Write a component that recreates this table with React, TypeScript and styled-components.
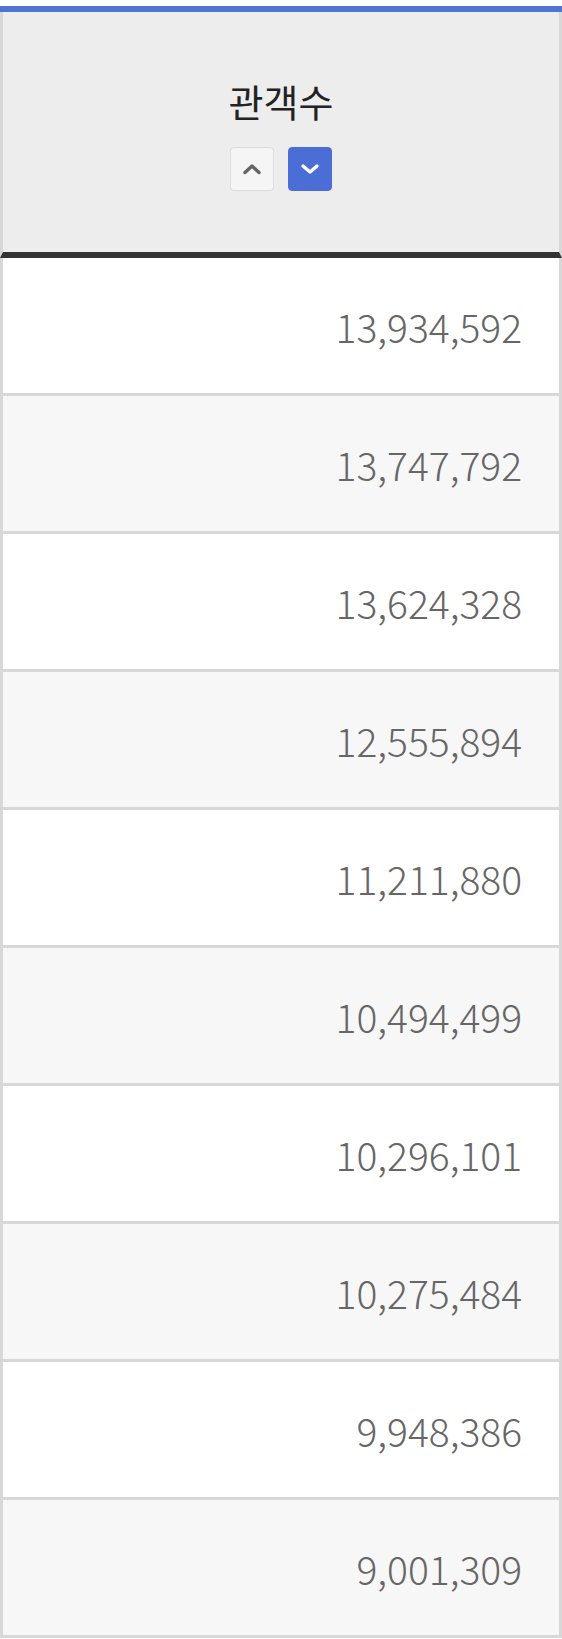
import React from "react";
import styled, { createGlobalStyle } from "styled-components";

const GlobalStyle = createGlobalStyle`
  html, body {
    margin: 0;
    padding: 0;
    background: #ffffff;
  }
  body {
    font-family: "Noto Sans CJK KR", "Noto Sans", sans-serif;
  }
`;

const Page = styled.div`
  padding-top: 6px;
  width: 562px;
`;

const Table = styled.div`
  display: flex;
  flex-direction: column;
  border-top: 6px solid #4f74d4;
`;

const HeaderCell = styled.div`
  display: flex;
  flex-direction: column;
  align-items: center;
  height: 246px;
  box-sizing: border-box;
  padding-top: 64px;
  background: #ededed;
  border-left: 3px solid #d8d8d8;
  border-right: 3px solid #d8d8d8;
  border-bottom: 6px solid #333333;
`;

const HeaderTitle = styled.div`
  font-size: 38px;
  line-height: 50px;
  color: #222222;
  font-weight: 400;
`;

const SortGroup = styled.div`
  display: flex;
  gap: 14px;
  margin-top: 21px;
`;

const SortButton = styled.button<{ $active?: boolean }>`
  width: 44px;
  height: 44px;
  padding: 0;
  display: flex;
  align-items: center;
  justify-content: center;
  border-radius: 4px;
  border: 1px solid ${(p) => (p.$active ? "#4a6dd6" : "#dcdcdc")};
  background: ${(p) => (p.$active ? "#4a6dd6" : "#f5f5f5")};
  color: ${(p) => (p.$active ? "#ffffff" : "#666666")};
  cursor: pointer;
`;

const Row = styled.div<{ $alt: boolean }>`
  display: flex;
  align-items: center;
  justify-content: flex-end;
  height: 138px;
  box-sizing: border-box;
  padding-right: 37px;
  background: ${(p) => (p.$alt ? "#f7f7f7" : "#ffffff")};
  border-left: 3px solid #d8d8d8;
  border-right: 3px solid #d8d8d8;
  border-bottom: 3px solid #d8d8d8;
`;

const Value = styled.span`
  font-family: "Noto Sans CJK KR Light", "Noto Sans CJK KR", "Noto Sans", sans-serif;
  font-size: 39px;
  font-weight: 300;
  color: #666666;
`;

const Chevron = ({ dir }: { dir: "up" | "down" }) => (
  <svg width="24" height="14" viewBox="0 0 24 14" fill="none">
    <path
      d={dir === "up" ? "M5 10.5 L12 4 L19 10.5" : "M5 4 L12 10 L19 4"}
      stroke="currentColor"
      strokeWidth="3.4"
      strokeLinecap="round"
      strokeLinejoin="round"
    />
  </svg>
);

const values = [
  "13,934,592",
  "13,747,792",
  "13,624,328",
  "12,555,894",
  "11,211,880",
  "10,494,499",
  "10,296,101",
  "10,275,484",
  "9,948,386",
  "9,001,309",
];

export default function App() {
  return (
    <Page>
      <GlobalStyle />
      <Table>
        <HeaderCell>
          <HeaderTitle>관객수</HeaderTitle>
          <SortGroup>
            <SortButton aria-label="오름차순">
              <Chevron dir="up" />
            </SortButton>
            <SortButton $active aria-label="내림차순">
              <Chevron dir="down" />
            </SortButton>
          </SortGroup>
        </HeaderCell>
        {values.map((v, i) => (
          <Row key={v} $alt={i % 2 === 1}>
            <Value>{v}</Value>
          </Row>
        ))}
      </Table>
    </Page>
  );
}
